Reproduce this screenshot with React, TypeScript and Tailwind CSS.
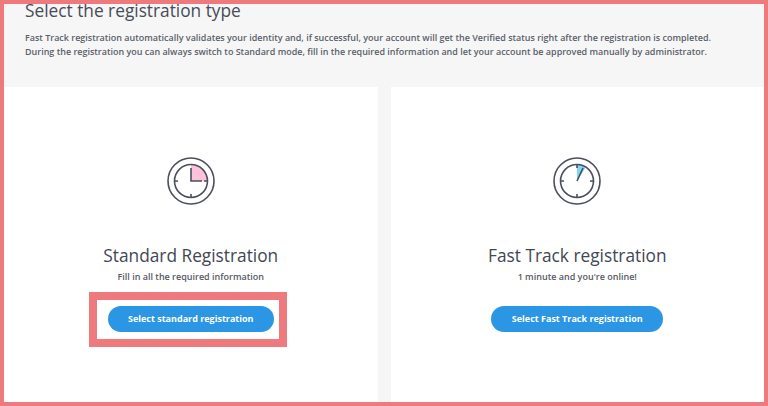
function ClockIcon({ wedge, fill, hands }: { wedge: string; fill: string; hands: string }) {
  return (
    <svg width="48" height="48" viewBox="0 0 48 48" fill="none" stroke="#4a4f5a" strokeWidth="1.6">
      <circle cx="24" cy="24" r="23" />
      <path d={wedge} fill={fill} stroke="none" />
      <circle cx="24" cy="24" r="16.5" />
      <path d="M24 37v3.5M7.5 24H11M37 24h3.5" />
      <path d={hands} />
    </svg>
  );
}

function RegistrationCard({ title, subtitle, action, wedge, fill, hands }: {
  title: string;
  subtitle: string;
  action: string;
  wedge: string;
  fill: string;
  hands: string;
}) {
  return (
    <div className="flex flex-1 flex-col items-center bg-white pt-[70px]">
      <ClockIcon wedge={wedge} fill={fill} hands={hands} />
      <h2 className="mt-[39px] text-[17.3px] leading-[24px] font-medium text-[#414754]">{title}</h2>
      <p className="mt-[2px] text-[9px] leading-[14px] font-semibold text-[#555a66]">{subtitle}</p>
      <button className="mt-[22px] h-[26px] rounded-full bg-[#2a96e4] px-[20.5px] text-[9px] font-bold text-white">{action}</button>
    </div>
  );
}

export default function App() {
  return (
    <div className="relative h-[406px] w-[768px] overflow-hidden border-4 border-[#ee7a7e] bg-[#f6f6f6] font-['Open_Sans',sans-serif]">
      <div className="flex h-[83px] flex-col pl-[21px]">
        <h1 className="-mt-[3px] text-[17.3px] leading-[20px] font-medium text-[#474c58]">Select the registration type</h1>
        <p className="mt-[10px] text-[8.98px] leading-[14px] font-semibold text-[#5a5f6a]">
          Fast Track registration automatically validates your identity and, if successful, your account will get the Verified status right after the registration is completed.
          <br />
          During the registration you can always switch to Standard mode, fill in the required information and let your account be approved manually by administrator.
        </p>
      </div>
      <div className="flex h-[315px] gap-[13px]">
        <RegistrationCard
          title="Standard Registration"
          subtitle="Fill in all the required information"
          action="Select standard registration"
          wedge="M24 7.5A16.5 16.5 0 0 1 40.5 24H24Z"
          fill="#ffc2da"
          hands="M24 11V24H35"
        />
        <RegistrationCard
          title="Fast Track registration"
          subtitle="1 minute and you're online!"
          action="Select Fast Track registration"
          wedge="M24 7.5A16.5 16.5 0 0 1 33 10L24 24Z"
          fill="#7fd6f7"
          hands="M24 7.5V11M24 24L30 11"
        />
      </div>
      <div className="absolute left-[85px] top-[288px] h-[55px] w-[198px] border-[8px] border-[#ee7a7e]" />
    </div>
  );
}
